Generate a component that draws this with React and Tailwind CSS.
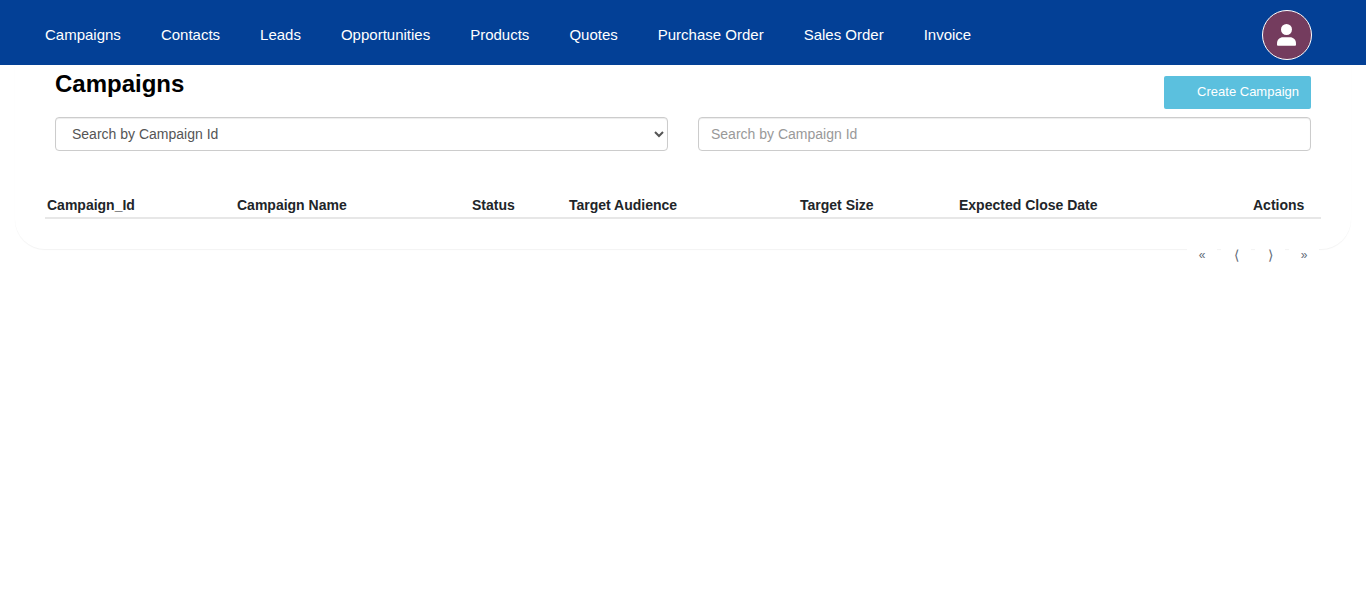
const links = [
  'Campaigns',
  'Contacts',
  'Leads',
  'Opportunities',
  'Products',
  'Quotes',
  'Purchase Order',
  'Sales Order',
  'Invoice',
];

const columns = [
  { label: 'Campaign_Id', width: 'w-[190px]' },
  { label: 'Campaign Name', width: 'w-[235px]' },
  { label: 'Status', width: 'w-[97px]' },
  { label: 'Target Audience', width: 'w-[231px]' },
  { label: 'Target Size', width: 'w-[159px]' },
  { label: 'Expected Close Date', width: 'w-[294px]' },
  { label: 'Actions', width: 'w-[70px]' },
];

const pages = [
  { glyph: '«', label: 'First page', size: 'text-xs' },
  { glyph: '⟨', label: 'Previous page', size: 'text-sm' },
  { glyph: '⟩', label: 'Next page', size: 'text-sm' },
  { glyph: '»', label: 'Last page', size: 'text-xs' },
];

function Header() {
  return (
    <header className="flex h-[65px] items-center justify-between bg-[#034096] pr-[54px] pl-[45px]">
      <nav className="flex gap-10 pt-1 text-[15px] leading-5 text-white">
        {links.map((link) => (
          <a key={link} href="#" className="whitespace-nowrap">
            {link}
          </a>
        ))}
      </nav>
      <button
        type="button"
        aria-label="Account"
        className="mt-[5px] flex size-[50px] items-center justify-center rounded-full border border-white bg-[#743c5e]"
      >
        <svg viewBox="0 0 20 22" className="h-[22px] w-5" fill="#fff" aria-hidden="true">
          <circle cx="9.500" cy="5.500" r="5.500" />
          <path d="M0 20.800v-1.300c0-3.700 2.600-6.200 6.200-6.200h6.600c3.600 0 6.200 2.500 6.200 6.200v1.300q0 1-1 1H1q-1 0-1-1z" />
        </svg>
      </button>
    </header>
  );
}

export default function App() {
  return (
    <div className="min-h-screen bg-white font-['Liberation_Sans',Arial,sans-serif] text-sm text-[#212529]">
      <Header />
      <main className="px-[15px]">
        <section className="rounded-b-[30px] px-[30px] pb-[30px] shadow-[0_1px_1px_rgba(0,0,0,0.05)]">
          <div className="flex items-start justify-between px-2.5">
            <h1 className="pt-1 text-2xl leading-[30px] font-bold text-black">Campaigns</h1>
            <button
              type="button"
              className="mt-[11px] h-[33px] rounded-[2px] bg-[#5bc0de] pr-3 pl-[33px] text-[13px] text-white"
            >
              Create Campaign
            </button>
          </div>
          <div className="mt-2 grid grid-cols-2 gap-[30px] px-2.5">
            <select
              aria-label="Search field"
              className="h-[34px] w-full rounded border border-[#ccc] bg-white px-3 text-sm text-[#555] shadow-[inset_0_1px_1px_rgba(0,0,0,0.075)]"
            >
              <option>Search by Campaign Id</option>
            </select>
            <input
              type="text"
              aria-label="Search by Campaign Id"
              placeholder="Search by Campaign Id"
              className="h-[34px] w-full rounded border border-[#ccc] bg-white px-3 text-sm text-[#555] shadow-[inset_0_1px_1px_rgba(0,0,0,0.075)] placeholder:text-[#999]"
            />
          </div>
          <table className="mt-11 w-full table-fixed border-collapse">
            <thead>
              <tr className="border-b-2 border-[#e7e7e7]">
                {columns.map((column) => (
                  <th
                    key={column.label}
                    scope="col"
                    className={`${column.width} px-0.5 pb-0.5 text-left leading-5 font-bold whitespace-nowrap`}
                  >
                    {column.label}
                  </th>
                ))}
              </tr>
            </thead>
            <tbody />
          </table>
        </section>
        <nav aria-label="Pagination" className="relative -mt-1 flex justify-end gap-1 pr-8">
          {pages.map((page) => (
            <button
              key={page.label}
              type="button"
              aria-label={page.label}
              className={`${page.size} h-5 w-[30px] bg-white text-[#5f6b78]`}
            >
              {page.glyph}
            </button>
          ))}
        </nav>
      </main>
    </div>
  );
}
